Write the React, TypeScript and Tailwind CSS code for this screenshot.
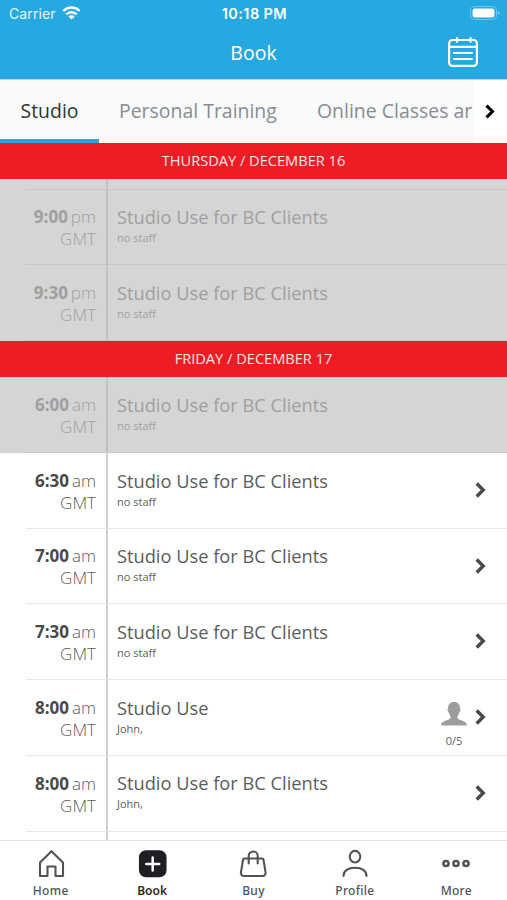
import type { ReactNode } from 'react'

type Session = {
    time: string
    period: string
    title: string
    staff: string
    past?: boolean
    spots?: string
}

const thursday: Session[] = [
    { time: '9:00', period: 'pm', title: 'Studio Use for BC Clients', staff: 'no staff', past: true },
    { time: '9:30', period: 'pm', title: 'Studio Use for BC Clients', staff: 'no staff', past: true },
]

const friday: Session[] = [
    { time: '6:00', period: 'am', title: 'Studio Use for BC Clients', staff: 'no staff', past: true },
    { time: '6:30', period: 'am', title: 'Studio Use for BC Clients', staff: 'no staff' },
    { time: '7:00', period: 'am', title: 'Studio Use for BC Clients', staff: 'no staff' },
    { time: '7:30', period: 'am', title: 'Studio Use for BC Clients', staff: 'no staff' },
    { time: '8:00', period: 'am', title: 'Studio Use', staff: 'John,', spots: '0/5' },
    { time: '8:00', period: 'am', title: 'Studio Use for BC Clients', staff: 'John,' },
]

const StatusBar = () => {
    return (
        <div className="grid grid-cols-3 items-center h-[27px] pl-[9px] pr-[7px] text-white font-['Inter',sans-serif]">
            <div className="flex items-center gap-[6px]">
                <span className="text-[14px] text-[#e6f6fd] tracking-[0.1px]">Carrier</span>
                <svg className="-mt-px" width="19" height="14" viewBox="0 0 18 14" fill="none" stroke="currentColor" strokeWidth="2.4">
                    <path d="M.8 5a11.500 11.500 0 0 1 16.400 0" />
                    <path d="M3.800 8.400a7.300 7.300 0 0 1 10.400 0" />
                    <path d="M9 13.600 5.900 10.500a4.400 4.400 0 0 1 6.200 0z" fill="currentColor" stroke="none" />
                </svg>
            </div>
            <span className="text-center text-[14.500px] font-semibold tracking-[0.4px]">10:18 PM</span>
            <svg className="justify-self-end -mt-px" width="30" height="14" viewBox="0 0 30 14" fill="none">
                <rect x=".5" y=".5" width="26" height="13" rx="4" stroke="#70c6ec" />
                <rect x="2.500" y="2.500" width="22" height="9" rx="2.400" fill="#fff" />
                <path d="M28 5v4c1-.3 1.600-1.100 1.600-2S29 5.300 28 5z" fill="#70c6ec" />
            </svg>
        </div>
    )
}

const Header = () => {
    return (
        <header className="h-[79px] shrink-0 bg-[#25a9e0]">
            <StatusBar />
            <div className="grid grid-cols-3 items-center h-[50px] px-[29px] text-white">
                <span />
                <h1 className="text-center text-[19.500px] pt-[2px]">Book</h1>
                <svg className="justify-self-end" width="30" height="30" viewBox="0 0 30 30" fill="none" stroke="currentColor" strokeWidth="2.200" strokeLinecap="round">
                    <rect x="1.100" y="3" width="27.800" height="25.900" rx="3.500" />
                    <path d="M1 9.800h28M9 1.200v3.600M22.500 1.200v3.600M6 16h18M6 22h18" />
                </svg>
            </div>
        </header>
    )
}

const Chevron = ({ className }: { className: string }) => {
    return (
        <svg className={className} width="11" height="16" viewBox="0 0 11 16" fill="none" stroke="currentColor" strokeWidth="3.400">
            <path d="M1.700 1.500 8.200 8l-6.500 6.500" />
        </svg>
    )
}

const Tabs = () => {
    return (
        <nav className="flex h-[63.500px] shrink-0 border-t border-[#a9dcf3] bg-[#f9fafc] text-[19.450px] text-[#8b8c8f]">
            <div className="flex items-center justify-center w-[99px] shrink-0 border-b-4 border-[#2da3d8] text-[#333] pt-[2px]">Studio</div>
            <div className="flex items-center pl-[20px] w-[218px] shrink-0 whitespace-nowrap pb-[2px]">Personal Training</div>
            <div className="flex items-center flex-1 overflow-hidden whitespace-nowrap pb-[2px]">Online Classes ar</div>
            <div className="flex items-center pl-[12px] w-[34px] shrink-0 bg-white text-black">
                <Chevron className="w-[10px] h-[15px]" />
            </div>
        </nav>
    )
}

const DayHeader = ({ label }: { label: string }) => {
    return (
        <div className="flex items-center justify-center h-[36.500px] shrink-0 bg-[#ee1c25] text-[#ffe4e4] text-[14.600px]">{label}</div>
    )
}

const SessionRow = ({ session }: { session: Session }) => {
    const { time, period, title, staff, past, spots } = session
    return (
        <div className={past ? 'flex h-[75.700px] shrink-0 bg-[#d5d5d5] text-[#9f9f9f]' : 'flex h-[75.700px] shrink-0 bg-white text-[#5c5c5c]'}>
            <div className="w-[26px]" />
            <div className={past ? 'w-[82px] border-r-2 border-r-[#c2c2c2] border-b border-b-[#c8c8c8] pr-[10px] text-right' : 'w-[82px] border-r-2 border-r-[#d0d0d0] border-b border-b-[#e8e8e8] pr-[10px] text-right'}>
                <div className="pt-[15.700px] text-[17px] leading-[23px] whitespace-nowrap">
                    <span className={past ? 'font-bold' : 'font-bold text-[#4a4a4a]'}>{time}</span>
                    <span className="font-light ml-[3px]">{period}</span>
                </div>
                <div className="text-[17px] leading-[22.500px] font-light">GMT</div>
            </div>
            <div className={past ? 'flex flex-1 border-b border-[#c8c8c8] pl-[9px]' : 'flex flex-1 border-b border-[#e8e8e8] pl-[9px]'}>
                <div className="flex-1 pt-[15.600px]">
                    <div className="text-[18.250px] leading-[23px]">{title}</div>
                    <div className="text-[11px] leading-[20px]">{staff}</div>
                </div>
                {spots && (
                    <div className="flex flex-col items-center w-[28px] pt-[22px] mr-[7px]">
                        <svg width="26" height="24" viewBox="0 0 26 24" fill="#9d9d9d">
                            <path d="M13 0c-4 0-6 2.600-6 6.200 0 .7-.7.800-.4 2.200.2 1.200.9 1.600 1.100 2.300.6 2 1.900 2.800 1.900 4.800 0 3.300-9.300 2-9.600 8h26c-.3-6-9.600-4.700-9.600-8 .1-2 1.300-2.800 1.900-4.800.2-.7.900-1.100 1.100-2.300.3-1.400-.4-1.500-.4-2.200C19 2.600 17 0 13 0z" />
                        </svg>
                        <span className="text-[11px] leading-[14px] mt-[8px]">{spots}</span>
                    </div>
                )}
                {!past && <Chevron className="mt-[29px] mr-[21px] text-[#4a4a4a]" />}
            </div>
        </div>
    )
}

const NavItem = ({ label, active, children }: { label: string; active?: boolean; children: ReactNode }) => {
    return (
        <div className={active ? 'flex flex-col items-center pt-[8px] text-[#2a2a2a]' : 'flex flex-col items-center pt-[8px] text-[#505357]'}>
            <svg width="30" height="30" viewBox="0 0 30 30" fill="none" stroke="currentColor" strokeWidth="2.100" strokeLinecap="round" strokeLinejoin="round">
                {children}
            </svg>
            <span className={active ? "mt-[4px] text-[12px] leading-[16px] font-['Noto_Sans',sans-serif] font-semibold" : "mt-[4px] text-[12px] leading-[16px] font-['Noto_Sans',sans-serif] font-medium tracking-[0.3px]"}>{label}</span>
        </div>
    )
}

const BottomNav = () => {
    return (
        <nav className="grid grid-cols-5 h-[60px] shrink-0 border-t border-[#e2e2e2] bg-white">
            <NavItem label="Home">
                <path d="M4 13.500 15.500 2.200 27 13.500V27h-7.500v-9.500h-8V27H4z" />
            </NavItem>
            <NavItem label="Book" active>
                <rect x="3" y="2.200" width="25.500" height="25" rx="6" fill="#1d1f22" stroke="#1d1f22" />
                <path d="M15.700 8.500v13M9.200 15h13" stroke="#fff" strokeWidth="2.500" />
            </NavItem>
            <NavItem label="Buy">
                <path d="M6.500 9.500h17.500a1.500 1.500 0 0 1 1.500 1.200l2 12.500a3 3 0 0 1-3 3.800H6a3 3 0 0 1-3-3.800l2-12.500a1.500 1.500 0 0 1 1.500-1.200z" />
                <path d="M10.700 14.500V7a4.500 4.500 0 0 1 9 0v7.500" />
            </NavItem>
            <NavItem label="Profile">
                <ellipse cx="15" cy="7.700" rx="5.300" ry="5.800" />
                <path d="M3.500 27c0-5 4.500-8.300 11.500-8.300s11.500 3.300 11.500 8.300" />
            </NavItem>
            <NavItem label="More">
                <circle cx="5" cy="14.500" r="2.600" strokeWidth="2.500" />
                <circle cx="15" cy="14.500" r="2.600" strokeWidth="2.500" />
                <circle cx="25" cy="14.500" r="2.600" strokeWidth="2.500" />
            </NavItem>
        </nav>
    )
}

const App = () => {
    return (
        <div className="flex flex-col w-[507px] h-[900px] overflow-hidden bg-white font-['Open_Sans',sans-serif]">
            <Header />
            <Tabs />
            <main className="flex flex-col h-[697.500px] shrink-0 overflow-hidden">
                <DayHeader label="THURSDAY / DECEMBER 16" />
                <div className="flex h-[10.500px] shrink-0 bg-[#d5d5d5]">
                    <div className="w-[26px]" />
                    <div className="w-[82px] border-r-2 border-r-[#c2c2c2] border-b border-b-[#c8c8c8]" />
                    <div className="flex-1 border-b border-[#c8c8c8]" />
                </div>
                {thursday.map((session, index) => (
                    <SessionRow key={index} session={session} />
                ))}
                <DayHeader label="FRIDAY / DECEMBER 17" />
                {friday.map((session, index) => (
                    <SessionRow key={index} session={session} />
                ))}
                <div className="flex flex-1">
                    <div className="w-[108px] border-r-2 border-[#d0d0d0]" />
                </div>
            </main>
            <BottomNav />
        </div>
    )
}

export default App
